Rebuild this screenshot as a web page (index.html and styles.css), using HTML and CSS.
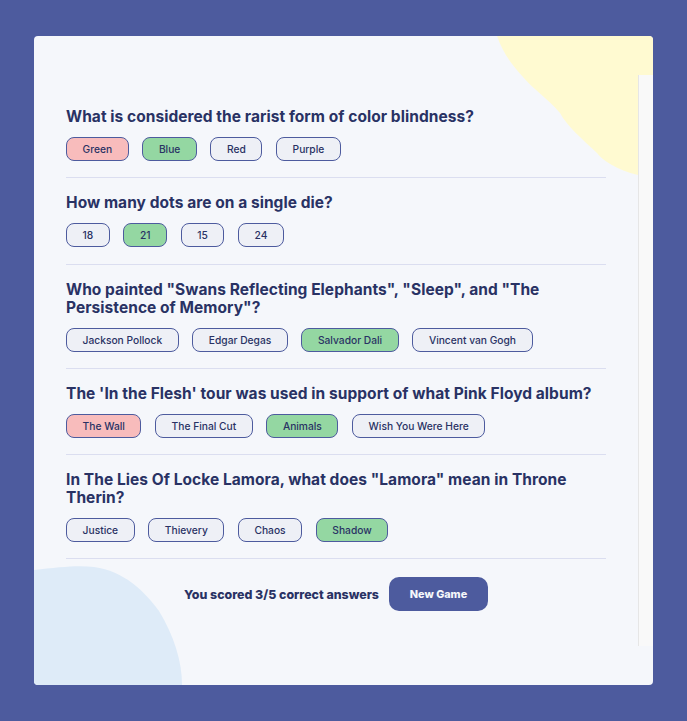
FILE: index.html
```html
<!DOCTYPE html>
<html lang="en">
<head>
<meta charset="utf-8">
<title>Quizzical</title>
<link rel="stylesheet" href="styles.css">
</head>
<body>
<main class="card">
  <svg class="blob blob-yellow" viewBox="0 0 156 139" preserveAspectRatio="none" aria-hidden="true">
    <path d="M0 0 H156 V139 H141 C120 134 105 124 100 117 C85 103 70 90 63 77 C50 62 35 52 26 41 C12 26 5 14 0 0 Z" fill="#fffad1"/>
  </svg>
  <svg class="blob blob-blue" viewBox="0 0 148 119" preserveAspectRatio="none" aria-hidden="true">
    <path d="M0 4 C25 1 45 -1 60 1 C90 5 110 25 125 45 C140 70 148 95 148 119 H0 Z" fill="#deebf8"/>
  </svg>
  <div class="content">
    <section class="question">
      <h2 class="q-title">What is considered the rarist form of color blindness?</h2>
      <div class="answers">
        <span class="answer wrong">Green</span>
        <span class="answer correct">Blue</span>
        <span class="answer">Red</span>
        <span class="answer">Purple</span>
      </div>
    </section>
    <section class="question">
      <h2 class="q-title">How many dots are on a single die?</h2>
      <div class="answers">
        <span class="answer">18</span>
        <span class="answer correct">21</span>
        <span class="answer">15</span>
        <span class="answer">24</span>
      </div>
    </section>
    <section class="question">
      <h2 class="q-title">Who painted "Swans Reflecting Elephants", "Sleep", and "The Persistence of Memory"?</h2>
      <div class="answers">
        <span class="answer">Jackson Pollock</span>
        <span class="answer">Edgar Degas</span>
        <span class="answer correct">Salvador Dali</span>
        <span class="answer">Vincent van Gogh</span>
      </div>
    </section>
    <section class="question">
      <h2 class="q-title">The 'In the Flesh' tour was used in support of what Pink Floyd album?</h2>
      <div class="answers">
        <span class="answer wrong">The Wall</span>
        <span class="answer">The Final Cut</span>
        <span class="answer correct">Animals</span>
        <span class="answer">Wish You Were Here</span>
      </div>
    </section>
    <section class="question">
      <h2 class="q-title">In The Lies Of Locke Lamora, what does "Lamora" mean in Throne Therin?</h2>
      <div class="answers">
        <span class="answer">Justice</span>
        <span class="answer">Thievery</span>
        <span class="answer">Chaos</span>
        <span class="answer correct">Shadow</span>
      </div>
    </section>
    <div class="result">
      <p class="score">You scored 3/5 correct answers</p>
      <button class="new-game" type="button">New Game</button>
    </div>
  </div>
  <div class="track"></div>
</main>
</body>
</html>
```

FILE: styles.css
```css
* { box-sizing: border-box; }

html, body { margin: 0; padding: 0; }

body {
  background: #4d5b9e;
  min-height: 721px;
  padding: 36px 34px;
  font-family: Inter, "Liberation Sans", sans-serif;
}

.card {
  position: relative;
  width: 619px;
  height: 649px;
  background: #f5f7fb;
  border-radius: 4px;
  overflow: hidden;
  display: flex;
  align-items: stretch;
  padding: 39px 0 39px 32px;
}

.blob { position: absolute; z-index: 0; }
.blob-yellow { top: 0; right: 0; width: 156px; height: 139px; }
.blob-blue { left: 0; bottom: 0; width: 148px; height: 119px; }

.content {
  position: relative;
  z-index: 1;
  width: 540px;
  margin-right: 32px;
}

.track {
  position: relative;
  z-index: 1;
  width: 15px;
  background: #f9f9f9;
  border-left: 1px solid #e6e6e6;
}

.question {
  padding: 16px 0 16.25px;
  border-bottom: 1px solid #dbdef0;
}

.question:first-child { padding-top: 33px; }

.q-title {
  margin: 0 0 11px;
  font-size: 15.5px;
  letter-spacing: 0.05px;
  line-height: 18px;
  font-weight: 700;
  color: #293264;
}

.answers {
  display: flex;
  gap: 13.5px;
}

.answer {
  display: inline-block;
  height: 24px;
  padding: 0 15.6px;
  border: 1px solid #4d5b9e;
  border-radius: 8px;
  background: #eef0f6;
  color: #293264;
  font-size: 10.24px;
  font-weight: 500;
  line-height: 22px;
  white-space: nowrap;
}

.answer.correct { background: #94d7a2; }
.answer.wrong { background: #f8bcbc; }

.result {
  display: flex;
  justify-content: center;
  align-items: center;
  gap: 10px;
  padding-top: 18px;
}

.score {
  margin: 0;
  font-size: 12.4px;
  font-weight: 800;
  color: #293264;
}

.new-game {
  width: 99px;
  height: 34px;
  border: none;
  border-radius: 10px;
  background: #4d5b9e;
  color: #f5f7fb;
  font-family: Inter, "Liberation Sans", sans-serif;
  font-size: 10.8px;
  font-weight: 800;
}
```
